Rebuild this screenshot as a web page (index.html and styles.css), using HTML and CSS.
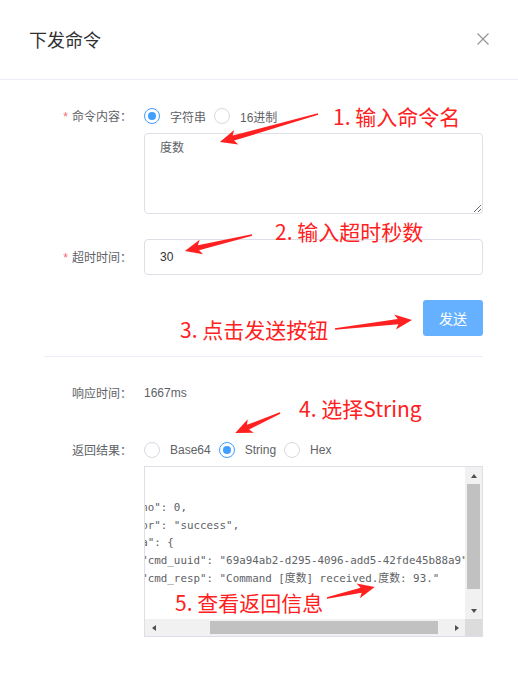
FILE: index.html
```html
<!DOCTYPE html>
<html lang="zh-CN">
<head>
<meta charset="utf-8">
<title>下发命令</title>
<link rel="stylesheet" href="styles.css">
</head>
<body>
<div class="dialog">
  <header class="dialog-header">
    <h2 class="dialog-title">下发命令</h2>
    <button class="dialog-close" aria-label="关闭">
      <svg width="12" height="12" viewBox="0 0 12 12"><path d="M0.5 0.5L11.5 11.5M11.5 0.5L0.5 11.5" stroke="#909399" stroke-width="1.1" fill="none"/></svg>
    </button>
  </header>
  <div class="dialog-body">
    <div class="form-row row-content">
      <label class="form-label"><span class="req">*</span>命令内容：</label>
      <div class="form-control">
        <div class="radio-group">
          <span class="radio checked"><span class="radio-dot"></span></span><span class="radio-text">字符串</span>
          <span class="radio"></span><span class="radio-text">16进制</span>
        </div>
        <textarea class="textarea">度数</textarea>
      </div>
    </div>
    <div class="form-row row-timeout">
      <label class="form-label tall"><span class="req">*</span>超时时间：</label>
      <div class="form-control">
        <input class="input" type="text" value="30">
      </div>
    </div>
    <div class="row-actions">
      <button class="btn-primary">发送</button>
    </div>
    <div class="divider"></div>
    <div class="form-row row-resp">
      <label class="form-label">响应时间：</label>
      <div class="form-control plain">1667ms</div>
    </div>
    <div class="form-row row-result">
      <label class="form-label">返回结果：</label>
      <div class="form-control">
        <div class="radio-group">
          <span class="radio"></span><span class="radio-text">Base64</span>
          <span class="radio checked"><span class="radio-dot"></span></span><span class="radio-text">String</span>
          <span class="radio"></span><span class="radio-text">Hex</span>
        </div>
        <div class="output">
          <div class="output-view">
<pre class="code">{
    "errno": 0,
    "error": "success",
    "data": {
        "cmd_uuid": "69a94ab2-d295-4096-add5-42fde45b88a9",
        "cmd_resp": "Command [度数] received.度数: 93."
    }
}</pre>
          </div>
          <div class="vscroll">
            <span class="sb-btn"><span class="tri tri-up"></span></span>
            <span class="sb-track"><span class="sb-thumb-v"></span></span>
            <span class="sb-btn"><span class="tri tri-down"></span></span>
          </div>
          <div class="hscroll">
            <span class="sb-btn"><span class="tri tri-left"></span></span>
            <span class="sb-track h"><span class="sb-thumb-h"></span></span>
            <span class="sb-btn"><span class="tri tri-right"></span></span>
          </div>
          <div class="sb-corner"></div>
        </div>
      </div>
    </div>
  </div>
</div>

<div class="annotations">
  <svg class="arrows" width="518" height="682" viewBox="0 0 518 682">
    <g fill="#ff2121">
      <polygon transform="translate(318,114) rotate(164.1)" points="0,-0.8 88,-2.6 85,-7.5 102,0 85,7.5 88,2.6 0,0.8"/>
      <polygon transform="translate(252,235) rotate(166.6)" points="0,-0.8 55,-2.6 52,-7.5 69,0 52,7.5 55,2.6 0,0.8"/>
      <polygon transform="translate(335,329) rotate(-6.7)" points="0,-0.8 63.5,-2.6 60.5,-7.5 77.5,0 60.5,7.5 63.5,2.6 0,0.8"/>
      <polygon transform="translate(280,413) rotate(156)" points="0,-0.8 35,-2.6 32,-7.5 49,0 32,7.5 35,2.6 0,0.8"/>
      <polygon transform="translate(327,598) rotate(-12.9)" points="0,-0.8 35,-2.6 32,-7.5 49,0 32,7.5 35,2.6 0,0.8"/>
    </g>
  </svg>
  <span class="note note-1">1. 输入命令名</span>
  <span class="note note-2">2. 输入超时秒数</span>
  <span class="note note-3">3. 点击发送按钮</span>
  <span class="note note-4">4. 选择String</span>
  <span class="note note-5">5. 查看返回信息</span>
</div>
</body>
</html>
```

FILE: styles.css
```css
* { box-sizing: border-box; }

html, body {
  margin: 0;
  padding: 0;
  background: #fff;
}

body {
  position: relative;
  width: 518px;
  height: 682px;
  overflow: hidden;
  font-family: "Liberation Sans", "Noto Sans CJK SC", sans-serif;
  color: #606266;
  font-size: 12px;
}

.dialog-header {
  height: 80px;
  border-bottom: 1px solid #ebeef5;
  display: flex;
  align-items: center;
  justify-content: space-between;
  padding: 0 29px 2px 29px;
}

.dialog-title {
  margin: 0;
  font-size: 18px;
  font-weight: normal;
  color: #303133;
  font-family: "Noto Sans CJK SC", sans-serif;
  line-height: 24px;
}

.dialog-close {
  border: 0;
  background: none;
  padding: 0;
  width: 12px;
  height: 12px;
  display: flex;
}

.dialog-body {
  padding: 24px 35px 0 44px;
}

.form-row {
  display: flex;
  align-items: flex-start;
}

.form-label {
  width: 100px;
  flex: none;
  text-align: right;
  padding-right: 12px;
  line-height: 24px;
  font-size: 12px;
  color: #606266;
  font-family: "Noto Sans CJK SC", sans-serif;
}

.form-label.tall { line-height: 36px; }

.req {
  color: #f56c6c;
  margin-right: 4px;
  font-family: "Liberation Sans", sans-serif;
}

.form-control {
  flex: 1;
  min-width: 0;
}

.form-control.plain {
  line-height: 24px;
}

.radio-group {
  display: flex;
  align-items: center;
  height: 24px;
}

.radio {
  width: 16px;
  height: 16px;
  border: 1px solid #d6d9df;
  border-radius: 50%;
  display: flex;
  align-items: center;
  justify-content: center;
  flex: none;
  background: #fff;
}

.radio.checked { border-color: #409eff; }

.radio-dot {
  width: 8px;
  height: 8px;
  border-radius: 50%;
  background: #409eff;
}

.radio-text {
  margin-left: 10px;
  margin-right: 8px;
  color: #606266;
  font-family: "Liberation Sans", "Noto Sans CJK SC", sans-serif;
}

.textarea {
  display: block;
  width: 100%;
  height: 81px;
  margin-top: 5px;
  border: 1px solid #dcdfe6;
  border-radius: 4px;
  padding: 5px 15px;
  font-family: "Noto Sans CJK SC", sans-serif;
  font-size: 12px;
  line-height: 16px;
  color: #606266;
  resize: vertical;
  outline: none;
}

.row-timeout { margin-top: 25px; }

.input {
  display: block;
  width: 100%;
  height: 36px;
  border: 1px solid #dcdfe6;
  border-radius: 4px;
  padding: 0 15px;
  font-family: "Liberation Sans", sans-serif;
  font-size: 12px;
  color: #303133;
  outline: none;
}

.row-actions {
  margin-top: 24px;
  display: flex;
  justify-content: flex-end;
}

.btn-primary {
  width: 60px;
  height: 36px;
  border: 0;
  border-radius: 3px;
  background: #66b1ff;
  color: #fff;
  font-size: 14px;
  font-family: "Noto Sans CJK SC", sans-serif;
  padding: 0;
}

.divider {
  margin-top: 20px;
  height: 1px;
  background: #ebeef5;
}

.row-resp { margin-top: 24px; }
.row-result { margin-top: 33px; }

.output {
  margin-top: 4px;
  height: 171px;
  border: 1px solid #dcdfe6;
  display: grid;
  grid-template-columns: 1fr 17px;
  grid-template-rows: 1fr 17px;
  overflow: hidden;
}

.output-view {
  overflow: hidden;
  padding-top: 14px;
}

.code {
  margin: 0 0 0 -56px;
  font-family: "DejaVu Sans Mono", "Noto Sans CJK SC", monospace;
  font-size: 10.85px;
  line-height: 17.8px;
  color: #606266;
  white-space: pre;
}

.vscroll {
  background: #f1f1f1;
  display: flex;
  flex-direction: column;
}

.hscroll {
  background: #f1f1f1;
  display: flex;
}

.sb-corner { background: #dcdcdc; }

.sb-btn {
  width: 17px;
  height: 17px;
  flex: none;
  display: flex;
  align-items: center;
  justify-content: center;
}

.sb-track {
  flex: 1;
  display: flex;
  flex-direction: column;
  align-items: center;
}

.sb-track.h {
  flex-direction: row;
  align-items: center;
}

.sb-thumb-v {
  width: 13px;
  height: 105px;
  background: #c1c1c1;
}

.sb-thumb-h {
  margin-left: 48px;
  width: 228px;
  height: 13px;
  background: #c1c1c1;
}

.tri { width: 0; height: 0; }
.tri-up { border-left: 3.5px solid transparent; border-right: 3.5px solid transparent; border-bottom: 4px solid #505050; }
.tri-down { border-left: 3.5px solid transparent; border-right: 3.5px solid transparent; border-top: 4px solid #505050; }
.tri-left { border-top: 3.5px solid transparent; border-bottom: 3.5px solid transparent; border-right: 4px solid #505050; }
.tri-right { border-top: 3.5px solid transparent; border-bottom: 3.5px solid transparent; border-left: 4px solid #505050; }

.annotations {
  position: absolute;
  left: 0;
  top: 0;
  width: 518px;
  height: 682px;
  pointer-events: none;
}

.arrows {
  position: absolute;
  left: 0;
  top: 0;
}

.note {
  position: absolute;
  white-space: nowrap;
  font-family: "Noto Sans CJK SC", sans-serif;
  font-size: 21px;
  line-height: 24px;
  color: #ff2121;
}

.note-1 { left: 333px; top: 104px; }
.note-2 { left: 275px; top: 219px; }
.note-3 { left: 180px; top: 317px; }
.note-4 { left: 299px; top: 396px; }
.note-5 { left: 175px; top: 590px; }
```
